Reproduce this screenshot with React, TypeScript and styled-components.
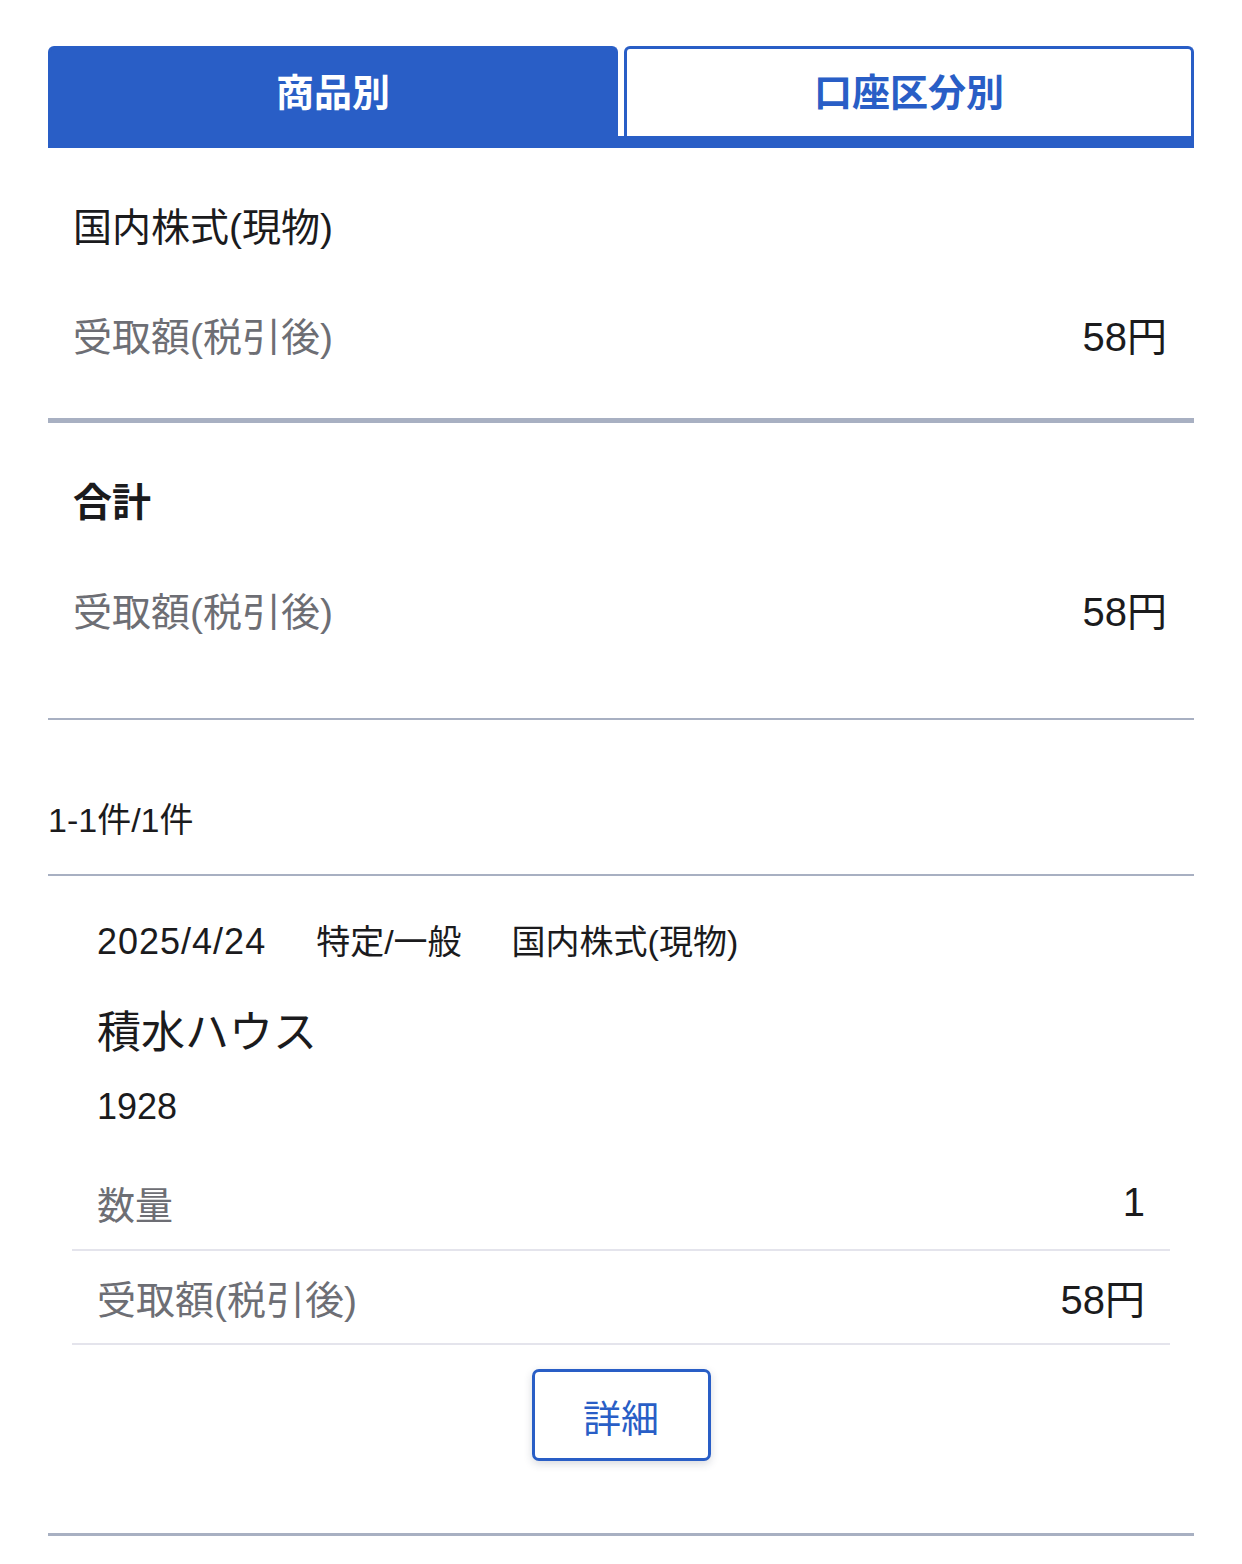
import * as React from 'react';
import styled, { createGlobalStyle, css } from 'styled-components';

const BLUE = '#295ec6';
const INK = '#1b1b1d';
const MUTED = '#6d6e74';
const RULE = '#a8b0c2';
const HAIR = '#e4e4ec';

const GlobalStyle = createGlobalStyle`
  html, body {
    margin: 0;
    padding: 0;
    background: #fff;
  }
  body {
    font-family: "Liberation Sans", "Noto Sans CJK JP", sans-serif;
    color: ${INK};
  }
`;

const Page = styled.div`
  width: 1146px;
  padding: 46px 48px 28px;
`;

const TabBar = styled.div`
  display: grid;
  grid-template-columns: 1fr 1fr;
  gap: 6px;
  border-bottom: 12px solid ${BLUE};
`;

const Tab = styled.button<{ $active?: boolean }>`
  box-sizing: border-box;
  width: 100%;
  height: 90px;
  margin: 0;
  padding: 0 0 6px;
  border: 3px solid ${BLUE};
  border-bottom: none;
  border-radius: 6px 6px 0 0;
  font-family: inherit;
  font-size: 38px;
  font-weight: 700;
  display: flex;
  align-items: center;
  justify-content: center;
  cursor: pointer;

  ${({ $active }) =>
    $active
      ? css`
          background: ${BLUE};
          color: #fff;
        `
      : css`
          background: #fff;
          color: ${BLUE};
        `}
`;

const Group = styled.section<{ $rule: number; $bottom: number }>`
  padding: 21px 27px ${({ $bottom }) => $bottom}px 25px;
  border-bottom: ${({ $rule }) => $rule}px solid ${RULE};
`;

const GroupTitle = styled.div<{ $bold?: boolean }>`
  height: 110px;
  display: flex;
  align-items: center;
  font-size: 39px;
  font-weight: ${({ $bold }) => ($bold ? 700 : 400)};
`;

const Row = styled.div<{ $height: number; $divider?: boolean }>`
  height: ${({ $height }) => $height}px;
  display: flex;
  align-items: center;
  justify-content: space-between;
  font-size: 39px;
  ${({ $divider }) =>
    $divider &&
    css`
      border-bottom: 2px solid ${HAIR};
    `}
`;

const Label = styled.span<{ $size?: number }>`
  color: ${MUTED};
  font-size: ${({ $size }) => $size ?? 39}px;
`;

const Value = styled.span`
  color: ${INK};
  font-size: 40px;
`;

const Count = styled.div`
  padding: 76px 0 30px;
  font-size: 34px;
  line-height: 48px;
  border-bottom: 2px solid ${RULE};
`;

const Card = styled.article`
  padding: 42px 24px 72px;
  border-bottom: 3px solid ${RULE};
`;

const Meta = styled.div`
  display: flex;
  align-items: baseline;
  gap: 50px;
  padding-left: 25px;
  font-size: 34px;
  line-height: 48px;
`;

const MetaDate = styled.span`
  font-size: 36px;
  letter-spacing: 1px;
`;

const Name = styled.div`
  margin-top: 37px;
  padding-left: 25px;
  font-size: 44px;
  line-height: 60px;
`;

const Code = styled.div`
  margin-top: 20px;
  padding-left: 25px;
  font-size: 36px;
  line-height: 48px;
`;

const ItemRows = styled.div`
  margin-top: 24px;

  ${Row} {
    padding: 0 25px;
  }
`;

const DetailButton = styled.button`
  display: block;
  margin: 24px auto 0;
  width: 179px;
  height: 92px;
  background: #fff;
  color: ${BLUE};
  border: 3px solid ${BLUE};
  border-radius: 7px;
  box-shadow: 0 3px 8px rgba(40, 50, 80, 0.18);
  font-family: inherit;
  font-size: 38px;
  cursor: pointer;
`;

export default function App() {
  const [tab, setTab] = React.useState<'product' | 'account'>('product');

  return (
    <Page>
      <GlobalStyle />
      <TabBar>
        <Tab $active={tab === 'product'} onClick={() => setTab('product')}>
          商品別
        </Tab>
        <Tab $active={tab === 'account'} onClick={() => setTab('account')}>
          口座区分別
        </Tab>
      </TabBar>

      <Group $rule={5} $bottom={29}>
        <GroupTitle>国内株式(現物)</GroupTitle>
        <Row $height={110}>
          <Label>受取額(税引後)</Label>
          <Value>58円</Value>
        </Row>
      </Group>

      <Group $rule={2} $bottom={54}>
        <GroupTitle $bold>合計</GroupTitle>
        <Row $height={110}>
          <Label>受取額(税引後)</Label>
          <Value>58円</Value>
        </Row>
      </Group>

      <Count>1-1件/1件</Count>

      <Card>
        <Meta>
          <MetaDate>2025/4/24</MetaDate>
          <span>特定/一般</span>
          <span>国内株式(現物)</span>
        </Meta>
        <Name>積水ハウス</Name>
        <Code>1928</Code>
        <ItemRows>
          <Row $height={94} $divider>
            <Label $size={38}>数量</Label>
            <Value>1</Value>
          </Row>
          <Row $height={92} $divider>
            <Label>受取額(税引後)</Label>
            <Value>58円</Value>
          </Row>
        </ItemRows>
        <DetailButton>詳細</DetailButton>
      </Card>
    </Page>
  );
}
